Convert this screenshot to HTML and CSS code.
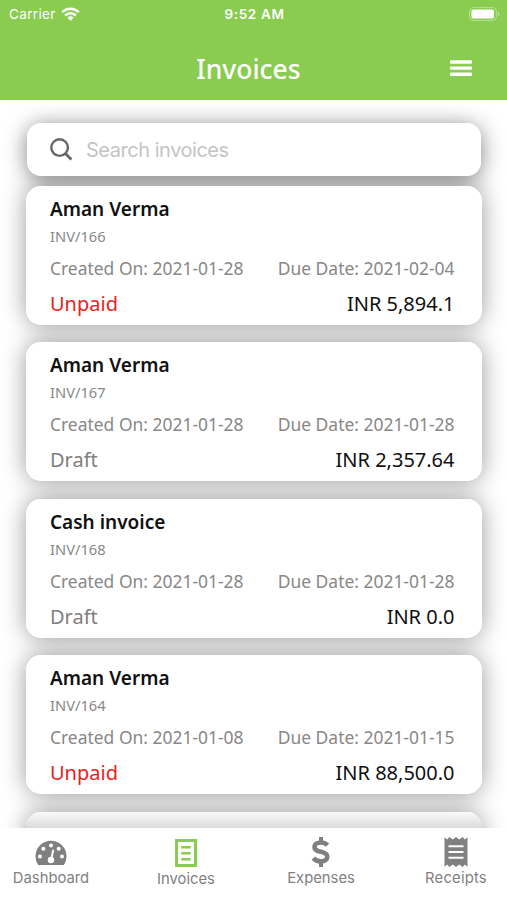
FILE: index.html
```html
<!DOCTYPE html>
<html lang="en">
<head>
<meta charset="utf-8">
<title>Invoices</title>
<link rel="stylesheet" href="styles.css">
</head>
<body>
<div class="app">
  <header class="header">
    <div class="status">
      <div class="carrier"><span>Carrier</span>
        <svg width="19" height="14" viewBox="0 0 19 14" fill="none" stroke="#fff" stroke-width="2.6"><path d="M1.2 5.1a11.8 11.8 0 0 1 16.6 0"/><path d="M4.2 8.5a7.5 7.5 0 0 1 10.600 0"/><path d="M9.500 13.800 6.500 10.800a4.300 4.300 0 0 1 6 0z" fill="#fff" stroke="none"/></svg>
      </div>
      <span class="clock">9:52 AM</span>
      <div class="battery"><svg width="31" height="14" viewBox="0 0 31 14"><rect x=".6" y=".6" width="26.8" height="12.8" rx="3.8" fill="none" stroke="#fff" stroke-opacity=".4"/><rect x="2.4" y="2.4" width="22.6" height="9.2" rx="2.2" fill="#fff"/><path d="M28.8 5v4q1.5-.6 1.5-2t-1.5-2" fill="#fff" fill-opacity=".5"/></svg></div>
    </div>
    <div class="titlebar">
      <h1>Invoices</h1>
      <svg class="menu" width="22" height="17" viewBox="0 0 22 17" fill="#fff"><rect y="0.3" width="22" height="3.4" rx="1"/><rect y="6.4" width="22" height="3.4" rx="1"/><rect y="12.5" width="22" height="3.4" rx="1"/></svg>
    </div>
  </header>
  <main class="content">
    <div class="search">
      <svg width="23" height="23" viewBox="0 0 23 23" fill="none" stroke="#666" stroke-width="2.4"><circle cx="9.6" cy="9.6" r="8.3"/><path d="m15.4 15.4 6 6" stroke-width="2.8"/></svg>
      <span>Search invoices</span>
    </div>
    <article class="card">
      <h2>Aman Verma</h2><p class="number">INV/166</p>
      <div class="row dates"><span>Created On: 2021-01-28</span><span>Due Date: 2021-02-04</span></div>
      <div class="row total"><span class="unpaid">Unpaid</span><span>INR 5,894.1</span></div>
    </article>
    <article class="card">
      <h2>Aman Verma</h2><p class="number">INV/167</p>
      <div class="row dates"><span>Created On: 2021-01-28</span><span>Due Date: 2021-01-28</span></div>
      <div class="row total"><span class="draft">Draft</span><span>INR 2,357.64</span></div>
    </article>
    <article class="card">
      <h2>Cash invoice</h2><p class="number">INV/168</p>
      <div class="row dates"><span>Created On: 2021-01-28</span><span>Due Date: 2021-01-28</span></div>
      <div class="row total"><span class="draft">Draft</span><span>INR 0.0</span></div>
    </article>
    <article class="card">
      <h2>Aman Verma</h2><p class="number">INV/164</p>
      <div class="row dates"><span>Created On: 2021-01-08</span><span>Due Date: 2021-01-15</span></div>
      <div class="row total"><span class="unpaid">Unpaid</span><span>INR 88,500.0</span></div>
    </article>
    <article class="card next"></article>
  </main>
  <nav class="tabs">
    <div class="tab dashboard">
      <svg width="32" height="26" viewBox="0 0 32 26"><path d="M3.1 25Q.5 21.5.5 16.300a15.500 15.500 0 0 1 31 0q0 5.200-2.600 8.700z" fill="#808080"/><g fill="#fff"><circle cx="5" cy="16.500" r="2"/><circle cx="8.300" cy="8.800" r="2"/><circle cx="16" cy="5.500" r="2"/><circle cx="23.700" cy="8.800" r="2"/><circle cx="27" cy="16.500" r="2"/><circle cx="16" cy="20" r="3.200"/></g><path d="m16.200 19.500 1.900-9" stroke="#fff" stroke-width="1.900" stroke-linecap="round"/></svg>
      <span>Dashboard</span>
    </div>
    <div class="tab invoices">
      <svg width="22" height="28" viewBox="0 0 22 28" fill="none" stroke="#89cc50"><rect x="1.500" y="1.500" width="19" height="25" stroke-width="3"/><path d="M6.300 8.300h9.400M6.300 14.300h9.400M6.300 20.300h9.400" stroke-width="2.400"/></svg>
      <span>Invoices</span>
    </div>
    <div class="tab expenses">
      <svg width="20" height="32" viewBox="0 0 20 32" fill="none" stroke="#808080"><path d="M10 1v5M10 26v5" stroke-width="4"/><path d="M16.600 9.200Q14 6.500 10 6.500C6 6.500 3.500 8.300 3.500 11c0 3.200 3 3.900 6.500 4.800 4 1 6.300 1.900 6.300 4.700 0 3.100-2.600 4.900-6.500 4.900-3.200 0-5.800-1.300-7.400-3.400" stroke-width="4.600"/></svg>
      <span>Expenses</span>
    </div>
    <div class="tab receipts">
      <svg width="24" height="32" viewBox="0 0 24 32"><path d="M.5 1 3 3.500 5.500 1 8.700 3.500 12 1l3.300 2.500L18.500 1 21 3.500 23.500 1v30L21 28.500 18.500 31l-3.200-2.500L12 31l-3.300-2.500L5.500 31 3 28.500.5 31z" fill="#808080"/><path d="M4.500 10.300h15M4.500 16h15M4.500 21.700h15" stroke="#fff" stroke-width="2"/></svg>
      <span>Receipts</span>
    </div>
  </nav>
</div>
</body>
</html>
```
FILE: styles.css
```css
* { box-sizing: border-box; }
body { margin: 0; background: #fff; font-family: "Noto Sans", sans-serif; }
h1, h2, p { margin: 0; font-weight: 400; }
svg { display: block; flex: none; }
.app { width: 507px; height: 900px; overflow: hidden; display: flex; flex-direction: column; }
.header { height: 100px; flex: none; background: #89cc50; color: #fff; }
.status { height: 27px; padding: 0 7px 0 9px; display: grid; grid-template-columns: 1fr auto 1fr; align-items: center; font-family: Inter, sans-serif; font-size: 13.5px; }
.carrier { display: flex; align-items: center; gap: 5px; letter-spacing: .35px; }
.clock { font-weight: 600; font-size: 13.5px; letter-spacing: .65px; }
.battery { display: flex; justify-content: flex-end; }
.titlebar { height: 72px; padding: 0 35px 0 47px; display: grid; grid-template-columns: 1fr 22px; align-items: center; }
.titlebar h1 { font-size: 26.5px; font-weight: 500; line-height: 36px; text-align: center; margin-top: 12px; }
.menu { margin-top: 11px; }
.content { flex: 1; min-height: 0; overflow: hidden; isolation: isolate; padding: 23px 25px 0 26px; }
.search { position: relative; height: 53px; margin: 0 1px 10px; padding: 0 23px; border-radius: 14px; background: #fff; display: flex; align-items: center; gap: 13px; color: #c4c4c6; font: 20px Inter, sans-serif; letter-spacing: -.47px; }
.card { position: relative; height: 139px; margin-bottom: 17.4px; padding: 11px 27.500px 0 24px; border-radius: 15px; background: #fff; }
.search::before, .card::before { content: ""; position: absolute; inset: 0; z-index: -1; border-radius: 15px; box-shadow: 0 0 24px rgba(0, 0, 0, .4); }
.search::before { box-shadow: 0 3px 22px rgba(0, 0, 0, .5); }
.card h2 { font-size: 19px; font-weight: 600; line-height: 25px; color: #111; }
.number { font-size: 14.7px; line-height: 20px; margin-top: 4px; color: #888; }
.row { display: flex; justify-content: space-between; white-space: nowrap; }
.dates { margin-top: 10px; line-height: 24px; font-size: 17.45px; color: #888; }
.total { margin-top: 10px; line-height: 28px; font-size: 20px; color: #111; }
.unpaid { color: #e92222; }
.draft { color: #808080; }
.next { background: linear-gradient(#fafafa, #d8d8d8 17px); }
.tabs { height: 72px; flex: none; background: #fff; display: grid; grid-template-columns: repeat(4, 135px); justify-content: center; color: #808080; font: 14.8px/18px Inter, sans-serif; }
.tab { display: flex; flex-direction: column; align-items: center; }
.dashboard svg { margin: 12px 0 3px; }
.invoices svg { margin: 11px 0 3px; }
.expenses svg, .receipts svg { margin: 8px 0 1px; }
.receipts { letter-spacing: .2px; }
```
